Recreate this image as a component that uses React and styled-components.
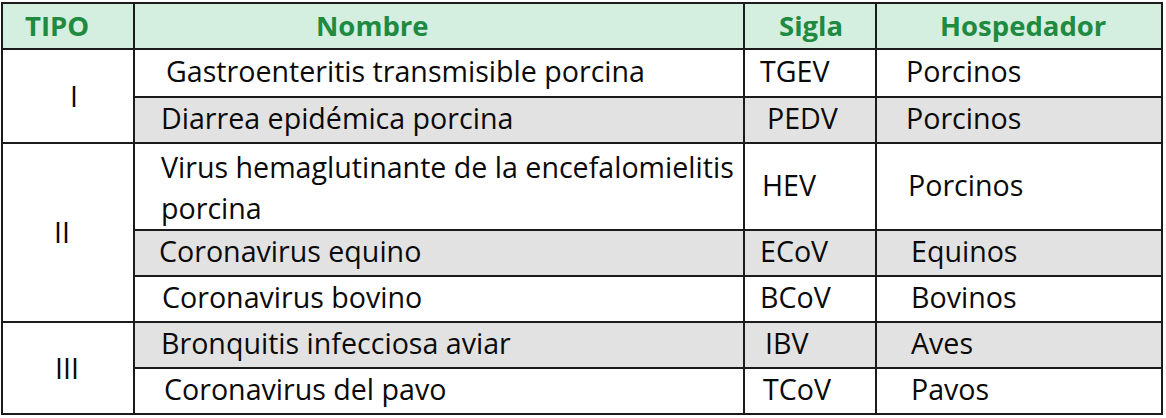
import React from "react";
import styled, { createGlobalStyle } from "styled-components";

const Global = createGlobalStyle`
  html, body { margin: 0; padding: 0; background: #ffffff; }
  body { font-family: "Open Sans", "Noto Sans", "Liberation Sans", sans-serif; }
`;

const Page = styled.div`
  padding: 2px 0 0 1px;
`;

const Table = styled.table`
  border-collapse: separate;
  border-spacing: 0;
  border-left: 2px solid #1b1b1b;
  border-top: 2px solid #1b1b1b;
  table-layout: fixed;
  width: 1162px;
  font-size: 28.6px;
  color: #0a0a0a;
`;

const Col = styled.col`
  width: ${(p) => p.$w}px;
`;

const HeadCell = styled.th`
  background: #d4efdf;
  color: #1f8a42;
  font-weight: 700;
  font-size: 27.5px;
  text-align: left;
  padding: 0 0 0 ${(p) => p.$pad}px;
  height: 44px;
  border-right: 2px solid #1b1b1b;
  border-bottom: 2px solid #1b1b1b;
  white-space: nowrap;
  line-height: 1;
`;

const TypeCell = styled.td`
  background: #ffffff;
  text-align: left;
  padding: 0 0 0 ${(p) => p.$pad}px;
  border-right: 2px solid #1b1b1b;
  border-bottom: 2px solid #1b1b1b;
  vertical-align: middle;
  line-height: 1;
`;

const Cell = styled.td`
  background: ${(p) => (p.$shade ? "#e2e2e2" : "#ffffff")};
  height: ${(p) => p.$h}px;
  padding: 0 0 ${(p) => (p.$multi ? 0 : 3)}px ${(p) => p.$pad}px;
  border-right: 2px solid #1b1b1b;
  border-bottom: 2px solid #1b1b1b;
  vertical-align: middle;
  line-height: ${(p) => (p.$multi ? "41px" : "1")};
  white-space: ${(p) => (p.$multi ? "normal" : "nowrap")};
`;

const groups = [
  {
    tipo: "I",
    pad: 67,
    rows: [
      { nombre: "Gastroenteritis transmisible porcina", sigla: "TGEV", host: "Porcinos", n: 31, s: 15, hh: 29, h: 43 },
      { nombre: "Diarrea epidémica porcina", sigla: "PEDV", host: "Porcinos", n: 26, s: 22, hh: 29, h: 41, shade: true },
    ],
  },
  {
    tipo: "II",
    pad: 51,
    rows: [
      { nombre: "Virus hemaglutinante de la encefalomielitis porcina", sigla: "HEV", host: "Porcinos", n: 26, s: 17, hh: 31, h: 82, multi: true },
      { nombre: "Coronavirus equino", sigla: "ECoV", host: "Equinos", n: 24, s: 15, hh: 34, h: 41, shade: true },
      { nombre: "Coronavirus bovino", sigla: "BCoV", host: "Bovinos", n: 27, s: 15, hh: 34, h: 41 },
    ],
  },
  {
    tipo: "III",
    pad: 52,
    rows: [
      { nombre: "Bronquitis infecciosa aviar", sigla: "IBV", host: "Aves", n: 26, s: 20, hh: 34, h: 41, shade: true },
      { nombre: "Coronavirus del pavo", sigla: "TCoV", host: "Pavos", n: 29, s: 18, hh: 34, h: 41 },
    ],
  },
];

export default function App() {
  return (
    <Page>
      <Global />
      <Table>
        <colgroup>
          <Col $w={132} />
          <Col $w={610} />
          <Col $w={132} />
          <Col $w={286} />
        </colgroup>
        <thead>
          <tr>
            <HeadCell $pad={22}>TIPO</HeadCell>
            <HeadCell $pad={181}>Nombre</HeadCell>
            <HeadCell $pad={34}>Sigla</HeadCell>
            <HeadCell $pad={63}>Hospedador</HeadCell>
          </tr>
        </thead>
        <tbody>
          {groups.map((g) =>
            g.rows.map((r, i) => (
              <tr key={r.sigla}>
                {i === 0 && (
                  <TypeCell rowSpan={g.rows.length} $pad={g.pad}>
                    {g.tipo}
                  </TypeCell>
                )}
                <Cell $h={r.h} $pad={r.n} $shade={r.shade} $multi={r.multi}>
                  {r.nombre}
                </Cell>
                <Cell $h={r.h} $pad={r.s} $shade={r.shade}>
                  {r.sigla}
                </Cell>
                <Cell $h={r.h} $pad={r.hh} $shade={r.shade}>
                  {r.host}
                </Cell>
              </tr>
            ))
          )}
        </tbody>
      </Table>
    </Page>
  );
}
